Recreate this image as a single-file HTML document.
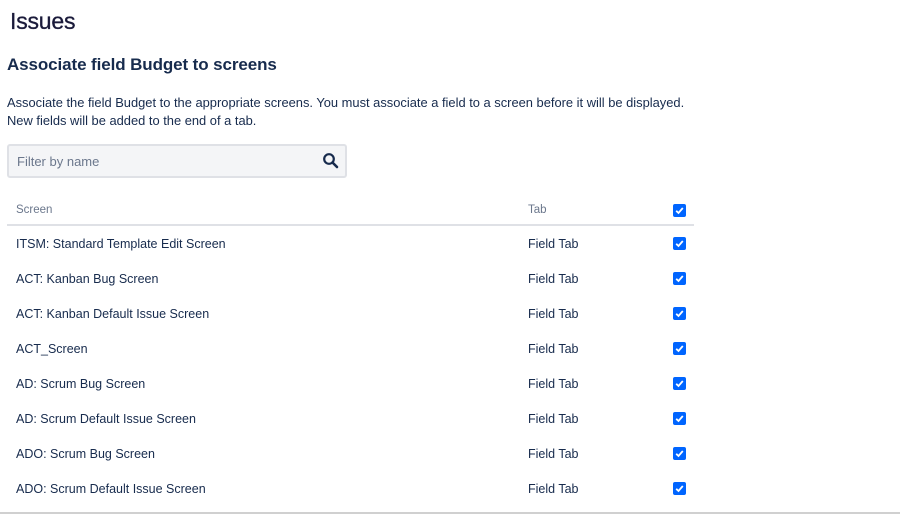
<!DOCTYPE html>
<html><head><style>
body{margin:0;width:900px;height:514px;background:#fff;font-family:"Liberation Sans",sans-serif;color:#172b4d;position:relative;overflow:hidden}
.a{position:absolute;white-space:nowrap}
h1{position:absolute;left:10px;top:8px;margin:0;font-size:23px;font-weight:normal;color:#1a1a3a;letter-spacing:-0.2px;-webkit-text-stroke:0.3px #1a1a3a}
h2{position:absolute;left:7px;top:55px;margin:0;font-size:17px;font-weight:bold;color:#172b4d;letter-spacing:-0.1px}
p{position:absolute;left:7px;top:94px;margin:0;font-size:12.9px;line-height:18px;color:#172b4d}
.inp{position:absolute;left:7px;top:144px;width:336px;height:30px;border:2px solid #dfe1e6;border-radius:3px;background:#f4f5f7}
.inp span{position:absolute;left:8px;top:8px;font-size:13px;color:#6b778c}
.hl{position:absolute;left:7px;top:224px;width:687px;height:2px;background:#dfe1e6}
.th{font-size:11.5px;color:#6b778c}
.td{font-size:12.5px;color:#172b4d}
.cb{position:absolute;left:673px;width:13px;height:13px;background:#0065ff;border-radius:2px}
.cb svg{position:absolute;left:0;top:0}
.bot{position:absolute;left:0;top:512px;width:900px;height:2px;background:#d0d0d0}
</style></head><body>
<h1>Issues</h1>
<h2>Associate field Budget to screens</h2>
<p>Associate the field Budget to the appropriate screens. You must associate a field to a screen before it will be displayed.<br>New fields will be added to the end of a tab.</p>
<div class="inp"><span>Filter by name</span>
<svg style="position:absolute;left:313px;top:6px" width="18" height="18" viewBox="0 0 18 18"><circle cx="7" cy="7" r="4.8" fill="none" stroke="#172b4d" stroke-width="2.2"/><path d="M10.5 10.5L15 15" stroke="#172b4d" stroke-width="2.6" stroke-linecap="round"/></svg></div>
<div class="a th" style="left:16px;top:204px">Screen</div>
<div class="a th" style="left:528px;top:204px">Tab</div>
<div class="cb" style="top:204px"><svg width="13" height="13"><path d="M3.2 6.8L5.5 9L9.8 4" fill="none" stroke="#fff" stroke-width="1.8"/></svg></div>
<div class="hl"></div>
<div class="a td" style="left:16px;top:237px">ITSM: Standard Template Edit Screen</div>
<div class="a td" style="left:16px;top:272px">ACT: Kanban Bug Screen</div>
<div class="a td" style="left:16px;top:307px">ACT: Kanban Default Issue Screen</div>
<div class="a td" style="left:16px;top:342px">ACT_Screen</div>
<div class="a td" style="left:16px;top:377px">AD: Scrum Bug Screen</div>
<div class="a td" style="left:16px;top:412px">AD: Scrum Default Issue Screen</div>
<div class="a td" style="left:16px;top:447px">ADO: Scrum Bug Screen</div>
<div class="a td" style="left:16px;top:482px">ADO: Scrum Default Issue Screen</div>
<div class="a td" style="left:528px;top:237px">Field Tab</div>
<div class="a td" style="left:528px;top:272px">Field Tab</div>
<div class="a td" style="left:528px;top:307px">Field Tab</div>
<div class="a td" style="left:528px;top:342px">Field Tab</div>
<div class="a td" style="left:528px;top:377px">Field Tab</div>
<div class="a td" style="left:528px;top:412px">Field Tab</div>
<div class="a td" style="left:528px;top:447px">Field Tab</div>
<div class="a td" style="left:528px;top:482px">Field Tab</div>
<div class="cb" style="top:237px"><svg width="13" height="13"><path d="M3.2 6.8L5.5 9L9.8 4" fill="none" stroke="#fff" stroke-width="1.8"/></svg></div>
<div class="cb" style="top:272px"><svg width="13" height="13"><path d="M3.2 6.8L5.5 9L9.8 4" fill="none" stroke="#fff" stroke-width="1.8"/></svg></div>
<div class="cb" style="top:307px"><svg width="13" height="13"><path d="M3.2 6.8L5.5 9L9.8 4" fill="none" stroke="#fff" stroke-width="1.8"/></svg></div>
<div class="cb" style="top:342px"><svg width="13" height="13"><path d="M3.2 6.8L5.5 9L9.8 4" fill="none" stroke="#fff" stroke-width="1.8"/></svg></div>
<div class="cb" style="top:377px"><svg width="13" height="13"><path d="M3.2 6.8L5.5 9L9.8 4" fill="none" stroke="#fff" stroke-width="1.8"/></svg></div>
<div class="cb" style="top:412px"><svg width="13" height="13"><path d="M3.2 6.8L5.5 9L9.8 4" fill="none" stroke="#fff" stroke-width="1.8"/></svg></div>
<div class="cb" style="top:447px"><svg width="13" height="13"><path d="M3.2 6.8L5.5 9L9.8 4" fill="none" stroke="#fff" stroke-width="1.8"/></svg></div>
<div class="cb" style="top:482px"><svg width="13" height="13"><path d="M3.2 6.8L5.5 9L9.8 4" fill="none" stroke="#fff" stroke-width="1.8"/></svg></div>
<div class="bot"></div>
</body></html>
